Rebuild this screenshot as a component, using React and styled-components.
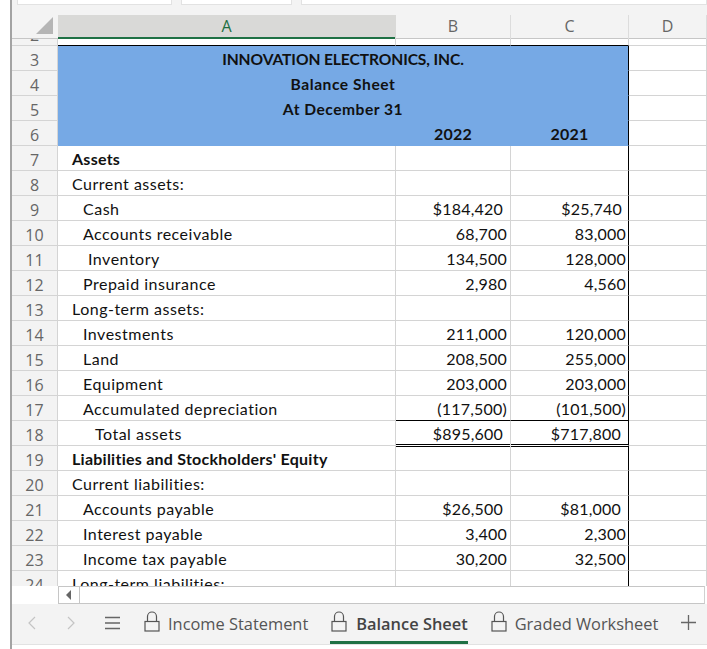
import React from 'react';
import styled, { createGlobalStyle, css } from 'styled-components';

const GlobalStyle = createGlobalStyle`
  html, body {
    margin: 0;
    padding: 0;
    background: #fff;
  }
`;

const CELL_FONT = `Lato, "Liberation Sans", sans-serif`;
const UI_FONT = `"Open Sans", "Noto Sans", sans-serif`;
const GRID = '#d4d4d4';
const BLUE = '#76a9e5';
const COLUMNS = '46px 338px 115px 118px 1fr';

const Window = styled.div`
  width: 695px;
  height: 649px;
  margin-left: 10px;
  overflow: hidden;
  background: #fff;
  border-left: 2px solid #a3a3a3;
  display: flex;
  flex-direction: column;
`;

const TopStrip = styled.div`
  height: 15px;
  flex: none;
  display: flex;
  gap: 9px;
  padding-left: 5px;
  background: #f3f3f3;
`;

const TopBox = styled.div`
  flex: ${(p) => (p.$width ? `0 0 ${p.$width}px` : 1)};
  height: 5px;
  background: #fff;
  border: 1px solid #e2e2e2;
  border-top: 0;
  box-sizing: border-box;
`;

const HeaderRow = styled.div`
  display: grid;
  grid-template-columns: ${COLUMNS};
  height: 24px;
  flex: none;
  background: #f3f3f3;
`;

const Corner = styled.div`
  position: relative;
  box-shadow: inset 0 -1px 0 #c6c6c6;

  svg {
    position: absolute;
    left: 24px;
    top: 2px;
  }
`;

const ColHead = styled.div`
  font-family: ${UI_FONT};
  font-size: 16px;
  line-height: 23px;
  text-align: center;
  color: ${(p) => (p.$active ? '#1d6f42' : '#666')};
  background: ${(p) => (p.$active ? '#d9d9d7' : 'transparent')};
  border-right: 1px solid ${(p) => (p.$active ? '#d9d9d7' : '#dcdcdc')};
  box-shadow: inset 0 ${(p) => (p.$active ? '-2px 0 #1f7145' : '-1px 0 #c6c6c6')};
`;

const Viewport = styled.div`
  height: 547px;
  flex: none;
  overflow: hidden;
`;

const Rows = styled.div`
  margin-top: -18px;
`;

const Row = styled.div`
  display: grid;
  grid-template-columns: ${COLUMNS};
  grid-template-rows: 25px;
  height: 25px;
`;

const RowNum = styled.div`
  font-family: ${UI_FONT};
  font-size: 16px;
  line-height: 28px;
  text-align: center;
  color: #666;
  background: #f3f3f3;
  box-sizing: border-box;
  border-bottom: 1px solid ${GRID};
  border-right: 1px solid ${GRID};
  overflow: hidden;
`;

const Cell = styled.div`
  font-family: ${CELL_FONT};
  font-size: 16px;
  letter-spacing: ${(p) => (p.$bold ? '0.25px' : '0.5px')};
  line-height: 26px;
  color: #111;
  white-space: nowrap;
  box-sizing: border-box;
  border-bottom: 1px solid ${(p) => (p.$topEdge || p.$underline ? '#000' : GRID)};
  border-right: 1px solid ${(p) => (p.$edge ? '#000' : GRID)};
  font-weight: ${(p) => (p.$bold ? 700 : 400)};
  ${(p) => p.$fill && css`
    background: ${BLUE};
    border-bottom-color: ${BLUE};
    border-right-color: ${p.$edge ? '#000' : BLUE};
  `}
  ${(p) => p.$double && css`
    border-bottom-color: #fff;
    box-shadow: inset 0 -1px 0 #000;
  `}
  ${(p) => p.$overline && css`
    box-shadow: inset 0 1px 0 #000;
  `}
`;

const LabelCell = styled(Cell)`
  padding-left: ${(p) => p.$indent}px;
`;

const ValueCell = styled(Cell)`
  text-align: right;
  letter-spacing: 0.2px;
  padding-right: ${(p) => p.$pad}px;
`;

const CenterCell = styled(Cell)`
  text-align: center;
`;

const TitleCell = styled(Cell)`
  grid-column: span 3;
  text-align: center;
  font-size: 15.6px;
  letter-spacing: ${(p) => p.$spacing}px;
`;

const Scrollbar = styled.div`
  height: 18px;
  flex: none;
  box-sizing: border-box;
  margin-left: 46px;
  margin-right: 2px;
  background: #fff;
  border: 1px solid #c6c6c6;
  border-right-color: #d0d0d0;
  display: flex;
`;

const ScrollButton = styled.div`
  width: 20px;
  display: flex;
  align-items: center;
  justify-content: center;
  border-right: 1px solid #c6c6c6;
`;

const TabBar = styled.div`
  height: 41px;
  flex: none;
  box-sizing: border-box;
  background: #f3f3f3;
  border-bottom: 1px solid #e2e2e2;
  display: flex;
  align-items: stretch;
  font-family: ${UI_FONT};
  font-size: 16.4px;
  color: #555;
`;

const NavIcons = styled.div`
  width: 131px;
  flex: none;
  display: flex;
  align-items: center;
  padding: 0 0 3px 15px;
  box-sizing: border-box;
  gap: 29px;
`;

const Tab = styled.div`
  display: flex;
  align-items: center;
  gap: ${(p) => (p.$active ? 9 : 8)}px;
  padding: 0 0 2px 1px;
  margin-right: ${(p) => p.$gap}px;
  font-weight: ${(p) => (p.$active ? 600 : 400)};
  color: ${(p) => (p.$active ? '#444' : '#555')};
  box-shadow: ${(p) => (p.$active ? 'inset 0 -3px 0 #1f7145' : 'none')};
  white-space: nowrap;
`;

const AddTab = styled.div`
  display: flex;
  align-items: center;
  padding-bottom: 3px;
`;

const LockSvg = styled.svg`
  margin-bottom: 4px;
`;

const LockIcon = () => (
  <LockSvg width="16" height="21" viewBox="0 0 16 21" fill="none" stroke="#555" strokeWidth="1.2">
    <rect x="1" y="10.5" width="14" height="9.5" />
    <path d="M3.5 10.5V5.5a4.5 4.5 0 0 1 9 0v5" />
  </LockSvg>
);

const Chevron = ({ flip, color }) => (
  <svg width="10" height="14" viewBox="0 0 10 14" fill="none" stroke={color} strokeWidth="1.2">
    <path d={flip ? 'M2 1l6 6-6 6' : 'M8 1L2 7l6 6'} />
  </svg>
);

const titleRows = [
  { n: 3, title: 'INNOVATION ELECTRONICS, INC.', spacing: -0.1 },
  { n: 4, title: 'Balance Sheet', spacing: 0.55 },
  { n: 5, title: 'At December 31', spacing: 0.5 },
];

const rows = [
  { n: 7, label: 'Assets', indent: 14, bold: true },
  { n: 8, label: 'Current assets:', indent: 14 },
  { n: 9, label: 'Cash', indent: 25, b: '$184,420', bp: 7, c: '$25,740', cp: 6 },
  { n: 10, label: 'Accounts receivable', indent: 25, b: '68,700', bp: 3, c: '83,000', cp: 2 },
  { n: 11, label: 'Inventory', indent: 30, b: '134,500', bp: 3, c: '128,000', cp: 2 },
  { n: 12, label: 'Prepaid insurance', indent: 25, b: '2,980', bp: 3, c: '4,560', cp: 2 },
  { n: 13, label: 'Long-term assets:', indent: 14 },
  { n: 14, label: 'Investments', indent: 25, b: '211,000', bp: 3, c: '120,000', cp: 2 },
  { n: 15, label: 'Land', indent: 25, b: '208,500', bp: 3, c: '255,000', cp: 2 },
  { n: 16, label: 'Equipment', indent: 25, b: '203,000', bp: 3, c: '203,000', cp: 2 },
  { n: 17, label: 'Accumulated depreciation', indent: 25, b: '(117,500)', bp: 3, c: '(101,500)', cp: 2, underline: true },
  { n: 18, label: 'Total assets', indent: 37, b: '$895,600', bp: 7, c: '$717,800', cp: 7, double: true },
  { n: 19, label: "Liabilities and Stockholders' Equity", indent: 14, bold: true, overline: true },
  { n: 20, label: 'Current liabilities:', indent: 14 },
  { n: 21, label: 'Accounts payable', indent: 25, b: '$26,500', bp: 7, c: '$81,000', cp: 7 },
  { n: 22, label: 'Interest payable', indent: 25, b: '3,400', bp: 3, c: '2,300', cp: 2 },
  { n: 23, label: 'Income tax payable', indent: 25, b: '30,200', bp: 3, c: '32,500', cp: 2 },
  { n: 24, label: 'Long-term liabilities:', indent: 14 },
];

const App = () => (
  <Window>
    <GlobalStyle />
    <TopStrip>
      <TopBox $width={155} />
      <TopBox $width={111} />
      <TopBox />
    </TopStrip>
    <HeaderRow>
      <Corner>
        <svg width="18" height="18" viewBox="0 0 18 18">
          <polygon points="17,0 17,17 0,17" fill="#b5b5b5" />
        </svg>
      </Corner>
      <ColHead $active>A</ColHead>
      <ColHead>B</ColHead>
      <ColHead>C</ColHead>
      <ColHead>D</ColHead>
    </HeaderRow>

    <Viewport>
      <Rows>
        <Row>
          <RowNum>2</RowNum>
          <Cell $topEdge />
          <Cell $topEdge />
          <Cell $topEdge />
          <Cell />
        </Row>
        {titleRows.map((r) => (
          <Row key={r.n}>
            <RowNum>{r.n}</RowNum>
            <TitleCell $fill $edge $bold $spacing={r.spacing}>{r.title}</TitleCell>
            <Cell />
          </Row>
        ))}
        <Row>
          <RowNum>6</RowNum>
          <Cell $fill />
          <CenterCell $fill $bold>2022</CenterCell>
          <CenterCell $fill $bold $edge>2021</CenterCell>
          <Cell />
        </Row>
        {rows.map((r) => (
          <Row key={r.n}>
            <RowNum>{r.n}</RowNum>
            <LabelCell $indent={r.indent} $bold={r.bold}>{r.label}</LabelCell>
            <ValueCell $pad={r.bp} $underline={r.underline} $double={r.double} $overline={r.overline}>{r.b}</ValueCell>
            <ValueCell $pad={r.cp} $underline={r.underline} $double={r.double} $overline={r.overline} $edge>{r.c}</ValueCell>
            <Cell />
          </Row>
        ))}
      </Rows>
    </Viewport>

    <Scrollbar>
      <ScrollButton>
        <svg width="6" height="10" viewBox="0 0 6 10">
          <polygon points="5,0 5,10 0,5" fill="#666" />
        </svg>
      </ScrollButton>
    </Scrollbar>

    <TabBar>
      <NavIcons>
        <Chevron color="#c4c4c4" />
        <Chevron flip color="#c4c4c4" />
        <svg width="15" height="14" viewBox="0 0 15 14" stroke="#666" strokeWidth="1.3">
          <path d="M0 1.5h15M0 7h15M0 12.5h15" />
        </svg>
      </NavIcons>
      <Tab $gap={22}>
        <LockIcon />
        Income Statement
      </Tab>
      <Tab $active $gap={22}>
        <LockIcon />
        Balance Sheet
      </Tab>
      <Tab $gap={23}>
        <LockIcon />
        Graded Worksheet
      </Tab>
      <AddTab>
        <svg width="15" height="15" viewBox="0 0 15 15" stroke="#666" strokeWidth="1.3">
          <path d="M7.5 0v15M0 7.5h15" />
        </svg>
      </AddTab>
    </TabBar>
  </Window>
);

export default App;
